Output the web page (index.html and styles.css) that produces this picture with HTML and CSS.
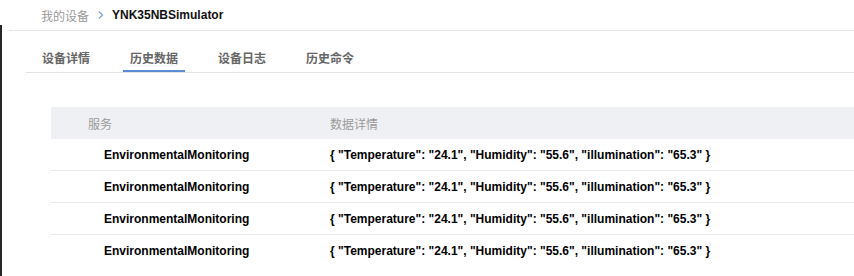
FILE: index.html
```html
<!DOCTYPE html>
<html lang="zh-CN">
<head>
<meta charset="utf-8">
<title>YNK35NBSimulator</title>
<link rel="stylesheet" href="styles.css">
</head>
<body>
<div class="page">
  <div class="breadcrumb">
    <span class="crumb-link">我的设备</span>
    <svg class="crumb-sep" width="8" height="10" viewBox="0 0 8 10"><path d="M2 1.5 L5.5 5 L2 8.5" fill="none" stroke="#7b9fd4" stroke-width="1.2"/></svg>
    <span class="crumb-current">YNK35NBSimulator</span>
  </div>
  <div class="tabs">
    <span class="tab">设备详情</span>
    <span class="tab active">历史数据</span>
    <span class="tab">设备日志</span>
    <span class="tab">历史命令</span>
  </div>
  <div class="table">
    <div class="row head">
      <div class="cell c1">服务</div>
      <div class="cell c2">数据详情</div>
    </div>
    <div class="row">
      <div class="cell c1">EnvironmentalMonitoring</div>
      <div class="cell c2">{ "Temperature": "24.1", "Humidity": "55.6", "illumination": "65.3" }</div>
    </div>
    <div class="row">
      <div class="cell c1">EnvironmentalMonitoring</div>
      <div class="cell c2">{ "Temperature": "24.1", "Humidity": "55.6", "illumination": "65.3" }</div>
    </div>
    <div class="row">
      <div class="cell c1">EnvironmentalMonitoring</div>
      <div class="cell c2">{ "Temperature": "24.1", "Humidity": "55.6", "illumination": "65.3" }</div>
    </div>
    <div class="row last">
      <div class="cell c1">EnvironmentalMonitoring</div>
      <div class="cell c2">{ "Temperature": "24.1", "Humidity": "55.6", "illumination": "65.3" }</div>
    </div>
  </div>
</div>
</body>
</html>
```
FILE: styles.css
```css
html, body {
  margin: 0;
  padding: 0;
  background: #ffffff;
}
body {
  font-family: "Liberation Sans", Arial, "Noto Sans CJK SC", sans-serif;
  font-size: 12px;
  color: #000;
  overflow: hidden;
}
.page {
  position: relative;
  height: 276px;
}
.page::before {
  content: "";
  position: absolute;
  left: 0;
  top: 25px;
  bottom: 0;
  width: 2px;
  background: #262626;
}
.breadcrumb {
  margin-left: 9px;
  padding-left: 32px;
  height: 30px;
  display: flex;
  align-items: center;
  border-bottom: 1px solid #e6e6e6;
}
.crumb-link {
  color: #999999;
  font-size: 12px;
}
.crumb-sep {
  margin: 0 7px 0 8px;
}
.crumb-current {
  font-weight: bold;
  font-size: 12px;
  color: #111;
}
.tabs {
  margin-left: 26px;
  padding-top: 18px;
  padding-left: 9px;
  display: flex;
  gap: 26px;
  border-bottom: 1px solid #e3e3e3;
}
.tab {
  padding: 0 7px 1px;
  line-height: 20px;
  font-size: 12px;
  font-weight: bold;
  color: #666666;
  border-bottom: 2px solid transparent;
}
.tab.active {
  border-bottom-color: #5b8dd6;
}
.table {
  margin-top: 34px;
  margin-left: 51px;
}
.row {
  display: grid;
  grid-template-columns: 279px 1fr;
  height: 31px;
  align-items: center;
  border-bottom: 1px solid #e8e8e8;
}
.row.head {
  height: 32px;
  background: #eff0f3;
  border-bottom: none;
  color: #9a9a9a;
  font-weight: normal;
}
.row.last {
  border-bottom: none;
}
.cell {
  white-space: nowrap;
}
.row .c1 {
  padding-left: 53px;
  font-weight: bold;
}
.row .c2 {
  font-weight: bold;
}
.row.head .c1 {
  padding-left: 37px;
  font-weight: normal;
}
.row.head .c2 {
  font-weight: normal;
}
```
